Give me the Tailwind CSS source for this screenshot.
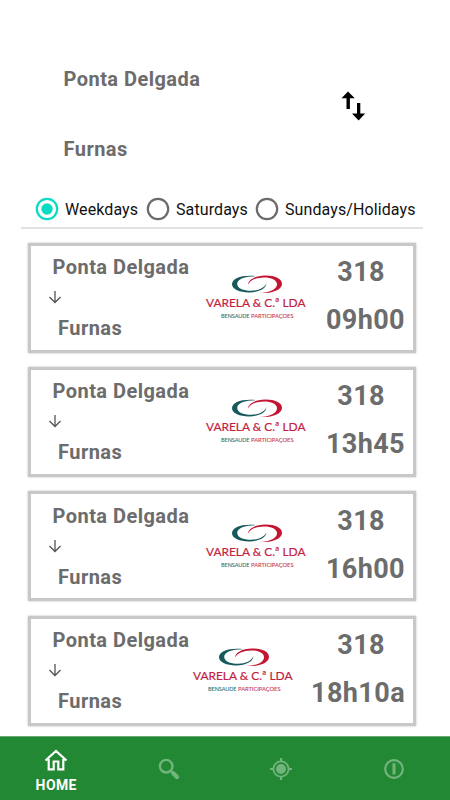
<!DOCTYPE html>
<html lang="en">
<head>
<meta charset="utf-8">
<title>Bus timetable</title>
<script src="https://cdn.jsdelivr.net/npm/@tailwindcss/browser@4"></script>
</head>
<body class="bg-white font-['Roboto',sans-serif]">
<svg class="hidden">
  <symbol id="logo" viewBox="0 0 102 48">
    <path fill="#17595c" d="M52 1.200C38 -.6 27 3 27 9.300c0 5.400 8.500 8.300 17.500 8.100C54 17.200 61.500 13.500 61.300 8.300 60 12.800 53.500 15.700 46 15.700c-8 0-13.800-2.600-13.800-7C32.200 4 40 1 52 1.200z"/>
    <path fill="#c31432" d="M43 9.600C43.200 4.500 50.500.7 60 .5c9.500-.2 17 2.900 17 8.300 0 6.300-10 10-22.500 9.200C65.500 17.500 72 14 72 9.200c0-4.300-5.800-6.800-13-6.800C51.500 2.400 44.800 5.300 43 9.600z"/>
    <text x="1" y="32" textLength="99.500" lengthAdjust="spacingAndGlyphs" font-family="Lato, sans-serif" font-size="12.300" font-weight="400" fill="#c31e43" stroke="#c31e43" stroke-width=".2">VARELA &amp; C.ª LDA</text>
    <text x="16" y="43" textLength="28.500" lengthAdjust="spacingAndGlyphs" font-family="Lato, sans-serif" font-size="5.800" font-weight="400" fill="#2c7474" stroke="#2c7474" stroke-width=".1">BENSAUDE</text>
    <text x="46" y="43" textLength="42.500" lengthAdjust="spacingAndGlyphs" font-family="Lato, sans-serif" font-size="5.800" font-weight="400" fill="#c83c57" stroke="#c83c57" stroke-width=".1">PARTICIPAÇOES</text>
  </symbol>
  <symbol id="down" viewBox="0 0 14 14">
    <path d="M7 1v11.500M1.500 7 7 12.500 12.500 7" fill="none" stroke="#555" stroke-width="1.300"/>
  </symbol>
</svg>
<div class="flex h-[800px] w-[450px] flex-col overflow-hidden">
  <header class="flex h-[190px] shrink-0 justify-between pt-[65px] pr-[84px] pl-[63.500px] text-[20px] leading-[28px] font-bold tracking-[0.460px] text-[#6c6c6c]">
    <div class="flex flex-col gap-[42px]"><div>Ponta Delgada</div><div>Furnas</div></div>
    <svg class="mt-[26px] h-[30px] w-[25px]" viewBox="0 0 25 30"><path d="M7 .5.500 7.200H5.500V18h3.400V7.200h4.900zM16 12v10.600h-5L17.600 29.500 24.200 22.600H19.300V12z"/></svg>
  </header>
  <div class="ml-[21px] flex h-[39px] w-[402px] shrink-0 items-center border-b-2 border-[#e2e2e2] pt-px text-[16px] tracking-[0.100px] text-[#111]">
    <div class="ml-[14px] flex w-[111px] items-center gap-[6px]"><svg class="size-6 shrink-0" viewBox="0 0 24 24"><circle cx="12" cy="12" r="10.200" fill="none" stroke="#0bdac5" stroke-width="2.200"/><circle cx="12" cy="12" r="5.700" fill="#0bdac5"/></svg><span class="pt-[2px]">Weekdays</span></div>
    <div class="flex w-[109px] items-center gap-[6px]"><svg class="size-6 shrink-0" viewBox="0 0 24 24"><circle cx="12" cy="12" r="10.200" fill="none" stroke="#6b6b6b" stroke-width="2.200"/></svg><span class="pt-[2px]">Saturdays</span></div>
    <div class="flex items-center gap-[6px]"><svg class="size-6 shrink-0" viewBox="0 0 24 24"><circle cx="12" cy="12" r="10.200" fill="none" stroke="#6b6b6b" stroke-width="2.200"/></svg><span class="pt-[2px]">Sundays/Holidays</span></div>
  </div>
  <main class="flex h-[507px] shrink-0 flex-col gap-[14.300px] pt-[13.700px] pl-[28px] font-bold whitespace-nowrap text-[#6c6c6c]">
    <section class="flex h-[110px] w-[388px] shrink-0 justify-between border-3 border-[#c8c8c8] pt-[7.300px] pr-[8px] pl-[17px] shadow-[0_0_2px_#bbb]">
      <div class="flex w-[153px] shrink-0 flex-col text-[20px] leading-[28px] tracking-[0.460px]"><div class="pl-[4.500px]">Ponta Delgada</div><svg class="mt-[9px] mb-[10px] size-[14px]"><use href="#down"/></svg><div class="pl-[10px]">Furnas</div></div>
      <svg class="mt-[22px] mr-auto ml-[4px] h-[48px] w-[102px] shrink-0"><use href="#logo"/></svg>
      <div class="flex flex-col items-center pt-px text-[27px] leading-[36px] tracking-[0.400px]"><div class="mb-[12px] self-end pr-[20px]">318</div><div>09h00</div></div>
    </section>
    <section class="flex h-[110px] w-[388px] shrink-0 justify-between border-3 border-[#c8c8c8] pt-[7.300px] pr-[8px] pl-[17px] shadow-[0_0_2px_#bbb]">
      <div class="flex w-[153px] shrink-0 flex-col text-[20px] leading-[28px] tracking-[0.460px]"><div class="pl-[4.500px]">Ponta Delgada</div><svg class="mt-[9px] mb-[10px] size-[14px]"><use href="#down"/></svg><div class="pl-[10px]">Furnas</div></div>
      <svg class="mt-[22px] mr-auto ml-[4px] h-[48px] w-[102px] shrink-0"><use href="#logo"/></svg>
      <div class="flex flex-col items-center pt-px text-[27px] leading-[36px] tracking-[0.400px]"><div class="mb-[12px] self-end pr-[20px]">318</div><div>13h45</div></div>
    </section>
    <section class="flex h-[110px] w-[388px] shrink-0 justify-between border-3 border-[#c8c8c8] pt-[7.300px] pr-[8px] pl-[17px] shadow-[0_0_2px_#bbb]">
      <div class="flex w-[153px] shrink-0 flex-col text-[20px] leading-[28px] tracking-[0.460px]"><div class="pl-[4.500px]">Ponta Delgada</div><svg class="mt-[9px] mb-[10px] size-[14px]"><use href="#down"/></svg><div class="pl-[10px]">Furnas</div></div>
      <svg class="mt-[22px] mr-auto ml-[4px] h-[48px] w-[102px] shrink-0"><use href="#logo"/></svg>
      <div class="flex flex-col items-center pt-px text-[27px] leading-[36px] tracking-[0.400px]"><div class="mb-[12px] self-end pr-[20px]">318</div><div>16h00</div></div>
    </section>
    <section class="flex h-[110px] w-[388px] shrink-0 justify-between border-3 border-[#c8c8c8] pt-[7.300px] pr-[8px] pl-[17px] shadow-[0_0_2px_#bbb]">
      <div class="flex w-[140px] shrink-0 flex-col text-[20px] leading-[28px] tracking-[0.460px]"><div class="pl-[4.500px]">Ponta Delgada</div><svg class="mt-[9px] mb-[10px] size-[14px]"><use href="#down"/></svg><div class="pl-[10px]">Furnas</div></div>
      <svg class="mt-[22px] mr-auto ml-[4px] h-[48px] w-[102px] shrink-0"><use href="#logo"/></svg>
      <div class="flex flex-col items-center pt-px text-[27px] leading-[36px] tracking-[0.400px]"><div class="mb-[12px] self-end pr-[20px]">318</div><div>18h10a</div></div>
    </section>
  </main>
  <nav class="grid h-[64px] shrink-0 grid-cols-4 border-t border-[#65a873] bg-[#228833] text-white">
    <div class="flex flex-col items-center pt-[12px]">
      <svg class="h-[23px] w-[24px]" viewBox="0 0 24 23"><path d="M1.500 11.500 12 2l10.500 9.500M4.700 10v10.400h5V12.500h4.600v7.900h5V10" fill="none" stroke="#fff" stroke-width="2.200"/></svg>
      <span class="mt-[4px] text-[14px] leading-[18px] font-bold tracking-[0.400px]">HOME</span>
    </div>
    <div class="flex justify-center pt-[21px]"><svg class="size-[22px]" viewBox="0 0 22 22" fill="none" stroke="#72b47e"><circle cx="8.200" cy="8.200" r="6.300" stroke-width="2.400"/><path d="m12.800 12.800 2 2" stroke-width="2.400"/><path d="m15.300 15.300 3.700 3.700" stroke-width="4.200" stroke-linecap="round"/></svg></div>
    <div class="flex justify-center pt-[21px]"><svg class="size-[22px]" viewBox="0 0 22 22"><circle cx="11" cy="11" r="7.600" fill="none" stroke="#72b47e" stroke-width="1.800"/><circle cx="11" cy="11" r="5" fill="#72b47e"/><path d="M11 0v3.500M11 18.500V22M0 11h3.500M18.500 11H22" stroke="#72b47e" stroke-width="2.200"/></svg></div>
    <div class="flex justify-center pt-[21px]"><svg class="size-[22px]" viewBox="0 0 22 22"><circle cx="11" cy="11" r="8.800" fill="none" stroke="#72b47e" stroke-width="2.200"/><path d="M11 5.300v11.200" stroke="#72b47e" stroke-width="3"/></svg></div>
  </nav>
</div>
</body>
</html>
